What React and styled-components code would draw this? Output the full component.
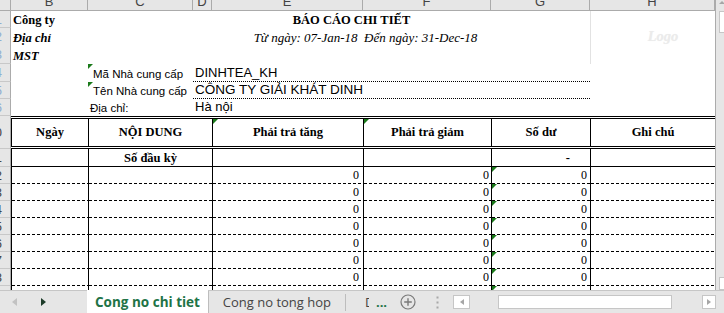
import React from 'react'
import styled, { createGlobalStyle } from 'styled-components'

// column widths: row header, B, C, D, E, F, G, H
const COLS = '11px 77px 105px 19px 151px 128px 99px 125px'
const SERIF = '"Liberation Serif", "Times New Roman", serif'
const SANS = '"Liberation Sans", Arial, sans-serif'
const UI = '"Open Sans", "Noto Sans", sans-serif'
const GREEN = '#217346'
const JUSTIFY = { left: 'flex-start', center: 'center', right: 'flex-end' }

const GlobalStyle = createGlobalStyle`
  *, *::before, *::after { box-sizing: border-box; }
  html, body { margin: 0; padding: 0; background: #fff; }
`

const Window = styled.div`
  width: 724px;
  height: 313px;
  display: flex;
  flex-direction: column;
  overflow: hidden;
  background: #fff;
`
const Main = styled.div`
  flex: 1;
  min-height: 0;
  display: flex;
`
const Sheet = styled.div`
  width: 715px;
  overflow: hidden;
  display: flex;
  flex-direction: column;
`
const Row = styled.div`
  flex: none;
  display: grid;
  grid-template-columns: ${COLS};
  height: ${p => p.$h}px;
`
const Corner = styled.div`
  grid-column: 1;
  background: #e6e6e6;
  border-right: 1px solid #ababab;
  border-bottom: 1px solid #ababab;
`
const ColHead = styled.div`
  background: #e6e6e6;
  border-right: 1px solid #ababab;
  border-bottom: 1px solid #ababab;
  display: flex;
  justify-content: center;
  align-items: flex-end;
  padding-bottom: 2px;
  overflow: hidden;
  font: 13px/1 ${SANS};
  color: #444;
`
const RowNum = styled.div`
  grid-column: 1;
  background: #e6e6e6;
  border-right: 1px solid #ababab;
  border-bottom: 1px solid #c8c8c8;
  display: flex;
  justify-content: flex-end;
  align-items: center;
  padding-right: 8px;
  overflow: hidden;
  white-space: nowrap;
  font: 13px/1 ${SANS};
  color: ${p => (p.$faint ? '#8eaed0' : '#444')};
`

const Cell = styled.div`
  grid-column: ${p => p.$col} / span ${p => p.$span || 1};
  position: relative;
  min-width: 0;
  display: flex;
  align-items: flex-end;
  justify-content: ${p => JUSTIFY[p.$align || 'left']};
  padding: 0 ${p => p.$pr ?? 2}px 1px ${p => p.$pl ?? 2}px;
  white-space: nowrap;
  line-height: 1.15;
  color: #000;
`
const InfoLabel = styled(Cell)`
  font: bold 12.5px/1.15 ${SERIF};
  font-style: ${p => (p.$italic ? 'italic' : 'normal')};
`
const Title = styled(Cell)`
  font: bold 12.5px/1.15 ${SERIF};
`
const DateLine = styled(Cell)`
  font: italic 13px/1.15 ${SERIF};
`
const GridGap = styled(Cell)`
  border-left: 1px solid #e2e2e2;
`
const LogoText = styled.span`
  font: bold italic 14.5px/1.15 ${SERIF};
  color: #ebebeb;
  text-shadow: 0 0 1px #f2f2f2;
  margin-bottom: 1px;
`
const SupplierLabel = styled(Cell)`
  font: 11.5px/1.15 ${SANS};
`
const SupplierValue = styled(Cell)`
  font: ${p => p.$size || 13}px/1.15 ${SANS};
  background: ${p =>
    p.$dotted
      ? 'linear-gradient(to right, #000 0 1px, transparent 1px 2px) left bottom / 2px 1px repeat-x'
      : 'none'};
`
const HeadCell = styled(Cell)`
  align-items: center;
  border-top: 3px double #000;
  border-bottom: 3px double #000;
  border-left: 1px solid #000;
  font: bold 12.5px/1.15 ${SERIF};
  padding-bottom: 0;
`
const TotalCell = styled(Cell)`
  border-left: 1px solid #000;
  border-bottom: 1px solid #000;
  font: bold 12.5px/1.15 ${SERIF};
`
const DataCell = styled(Cell)`
  border-left: 1px solid #000;
  font: 12px/1.15 ${SERIF};
  background: linear-gradient(to right, #000 0 3px, transparent 3px 5px) left bottom / 5px 1px repeat-x;
  padding-bottom: 1px;
`
const Marker = styled.span`
  position: absolute;
  top: 0;
  left: 0;
  width: 0;
  height: 0;
  border-top: 5px solid #1b7a1b;
  border-right: 5px solid transparent;
`

const VScroll = styled.div`
  width: 9px;
  border-left: 1px solid #ababab;
  background: #e6e6e6;
  display: flex;
  flex-direction: column;
  padding-left: 3px;
`
const ScrollArrowBox = styled.div`
  height: 11px;
  display: flex;
  align-items: center;
  justify-content: center;
`
const VThumb = styled.div`
  height: ${p => p.$h}px;
  background: #fff;
  border: 1px solid #c6c6c6;
  border-right: none;
`
const Spacer = styled.div`
  flex: 1;
`

const TabBar = styled.div`
  flex: none;
  height: 23px;
  display: flex;
  align-items: stretch;
  background: #e6e6e6;
  border-top: 1px solid #c6c6c6;
  font-family: ${UI};
`
const NavArea = styled.div`
  width: 87px;
  display: flex;
  align-items: center;
  padding-left: 12px;
  gap: 24px;
`
const NavArrow = styled.span`
  width: 0;
  height: 0;
  border-top: 4px solid transparent;
  border-bottom: 4px solid transparent;
  ${p =>
    p.$dir === 'left'
      ? `border-right: 5px solid ${p.$on ? '#1d3b29' : '#c2c2c2'};`
      : `border-left: 5px solid ${p.$on ? '#1d3b29' : '#c2c2c2'};`}
`
const ActiveTab = styled.div`
  width: 121px;
  margin-top: -1px;
  background: #fff;
  color: ${GREEN};
  font-weight: 700;
  font-size: 13.5px;
  display: flex;
  align-items: center;
  justify-content: center;
  white-space: nowrap;
`
const Tab = styled.div`
  width: 137px;
  border-left: 1px solid #bdbdbd;
  color: #444;
  font-size: 13px;
  display: flex;
  align-items: center;
  justify-content: center;
  white-space: nowrap;
`
const TabSep = styled.div`
  width: 1px;
  height: 17px;
  align-self: center;
  background: #bdbdbd;
`
const ClippedTab = styled.div`
  width: 23px;
  padding-left: 19px;
  overflow: hidden;
  color: #444;
  font-size: 13px;
  display: flex;
  align-items: center;
  white-space: nowrap;
`
const MoreDots = styled.div`
  margin-left: 7px;
  color: ${GREEN};
  font-weight: 700;
  font-size: 13px;
  display: flex;
  align-items: center;
`
const IconBox = styled.div`
  margin-left: ${p => p.$ml}px;
  display: flex;
  align-items: center;
`
const HScroll = styled.div`
  margin-left: 14px;
  width: 263px;
  display: flex;
  align-items: center;
`
const ScrollBtn = styled.div`
  width: ${p => p.$w}px;
  height: 14px;
  background: #fff;
  border: 1px solid #c6c6c6;
  display: flex;
  align-items: center;
  justify-content: center;
`
const HThumb = styled.div`
  margin-left: 28px;
  width: 174px;
  height: 14px;
  background: #fff;
  border: 1px solid #c6c6c6;
`
const HTrack = styled.div`
  flex: 1;
`
const ScrollCorner = styled.div`
  width: 8px;
`
const Tri = styled.span`
  width: 0;
  height: 0;
  border-top: 3px solid transparent;
  border-bottom: 3px solid transparent;
  ${p => (p.$dir === 'left' ? 'border-right: 4px solid #a6a6a6;' : 'border-left: 4px solid #a6a6a6;')}
`
const TriUp = styled.span`
  width: 0;
  height: 0;
  border-left: 3px solid transparent;
  border-right: 3px solid transparent;
  border-bottom: 3px solid #a6a6a6;
  margin-top: -6px;
`

const LETTERS = ['B', 'C', 'D', 'E', 'F', 'G', 'H']
const DATA_ROWS = [12, 13, 14, 15, 16, 17, 18, 19]

function PlusIcon() {
  return (
    <svg width="16" height="16" viewBox="0 0 16 16">
      <circle cx="8" cy="8" r="7" fill="none" stroke="#7a7a7a" strokeWidth="1.2" />
      <path d="M8 4.2v7.6M4.2 8h7.6" stroke="#7a7a7a" strokeWidth="1.4" />
    </svg>
  )
}

function VDots() {
  return (
    <svg width="3" height="13" viewBox="0 0 3 13">
      <rect x="0.5" y="0.5" width="2" height="2" fill="#a8a8a8" />
      <rect x="0.5" y="5.5" width="2" height="2" fill="#a8a8a8" />
      <rect x="0.5" y="10.5" width="2" height="2" fill="#a8a8a8" />
    </svg>
  )
}

function SupplierRow({ num, h, label, value, size, dotted, marker }) {
  return (
    <Row $h={h}>
      <RowNum $faint>{num}</RowNum>
      <SupplierLabel $col={3} $pl={marker ? 5 : 2}>
        {marker && <Marker />}
        {label}
      </SupplierLabel>
      <SupplierValue $col={4} $span={4} $size={size} $dotted={dotted}>
        {value}
      </SupplierValue>
    </Row>
  )
}

export default function App() {
  return (
    <Window>
      <GlobalStyle />
      <Main>
        <Sheet>
          <Row $h={11}>
            <Corner />
            {LETTERS.map(l => (
              <ColHead key={l}>{l}</ColHead>
            ))}
          </Row>

          <Row $h={17}>
            <RowNum $faint>1</RowNum>
            <InfoLabel $col={2}>Công ty</InfoLabel>
            <Title $col={5} $span={2} $align="center">BÁO CÁO CHI TIẾT</Title>
            <GridGap $col={8} />
          </Row>
          <Row $h={18}>
            <RowNum $faint>2</RowNum>
            <InfoLabel $col={2} $italic>Địa chỉ</InfoLabel>
            <DateLine $col={5} $span={2} $align="center" $pl={30}>
              Từ ngày: 07-Jan-18&nbsp; Đến ngày: 31-Dec-18
            </DateLine>
            <GridGap $col={8} $align="center" $pl={22}>
              <LogoText>Logo</LogoText>
            </GridGap>
          </Row>
          <Row $h={18}>
            <RowNum $faint>3</RowNum>
            <InfoLabel $col={2} $italic>MST</InfoLabel>
            <GridGap $col={8} />
          </Row>

          <SupplierRow num={4} h={18} label="Mã Nhà cung cấp" value="DINHTEA_KH" dotted marker />
          <SupplierRow num={5} h={17} label="Tên Nhà cung cấp" value="CÔNG TY GIẢI KHÁT DINH" size={13.5} dotted marker />
          <SupplierRow num={6} h={17} label="Địa chỉ:" value="Hà nội" />

          <Row $h={33}>
            <RowNum>10</RowNum>
            <HeadCell $col={2} $align="center">Ngày</HeadCell>
            <HeadCell $col={3} $span={2} $align="center">NỘI DUNG</HeadCell>
            <HeadCell $col={5} $align="center">
              <Marker />
              Phải trả tăng
            </HeadCell>
            <HeadCell $col={6} $align="center">
              <Marker />
              Phải trả giảm
            </HeadCell>
            <HeadCell $col={7} $align="center">Số dư</HeadCell>
            <HeadCell $col={8} $align="center">Ghi chú</HeadCell>
          </Row>

          <Row $h={18}>
            <RowNum>11</RowNum>
            <TotalCell $col={2} />
            <TotalCell $col={3} $span={2} $align="center">Số đầu kỳ</TotalCell>
            <TotalCell $col={5} />
            <TotalCell $col={6} />
            <TotalCell $col={7} $align="right" $pr={20}>-</TotalCell>
            <TotalCell $col={8} />
          </Row>

          {DATA_ROWS.map(n => (
            <Row $h={17} key={n}>
              <RowNum>{n}</RowNum>
              <DataCell $col={2} />
              <DataCell $col={3} $span={2} />
              <DataCell $col={5} $align="right" $pr={4}>0</DataCell>
              <DataCell $col={6} $align="right" $pr={2}>0</DataCell>
              <DataCell $col={7} $align="right" $pr={3}>
                <Marker />
                0
              </DataCell>
              <DataCell $col={8} />
            </Row>
          ))}
        </Sheet>
        <VScroll>
          <ScrollArrowBox>
            <TriUp />
          </ScrollArrowBox>
          <VThumb $h={22} />
          <Spacer />
          <VThumb $h={13} />
        </VScroll>
      </Main>

      <TabBar>
        <NavArea>
          <NavArrow $dir="left" />
          <NavArrow $dir="right" $on />
        </NavArea>
        <ActiveTab>Cong no chi tiet</ActiveTab>
        <Tab>Cong no tong hop</Tab>
        <TabSep />
        <ClippedTab>D</ClippedTab>
        <MoreDots>...</MoreDots>
        <IconBox $ml={13}>
          <PlusIcon />
        </IconBox>
        <IconBox $ml={20}>
          <VDots />
        </IconBox>
        <HScroll>
          <ScrollBtn $w={17}>
            <Tri $dir="left" />
          </ScrollBtn>
          <HThumb />
          <HTrack />
          <ScrollBtn $w={14}>
            <Tri $dir="right" />
          </ScrollBtn>
        </HScroll>
        <ScrollCorner />
      </TabBar>
    </Window>
  )
}
